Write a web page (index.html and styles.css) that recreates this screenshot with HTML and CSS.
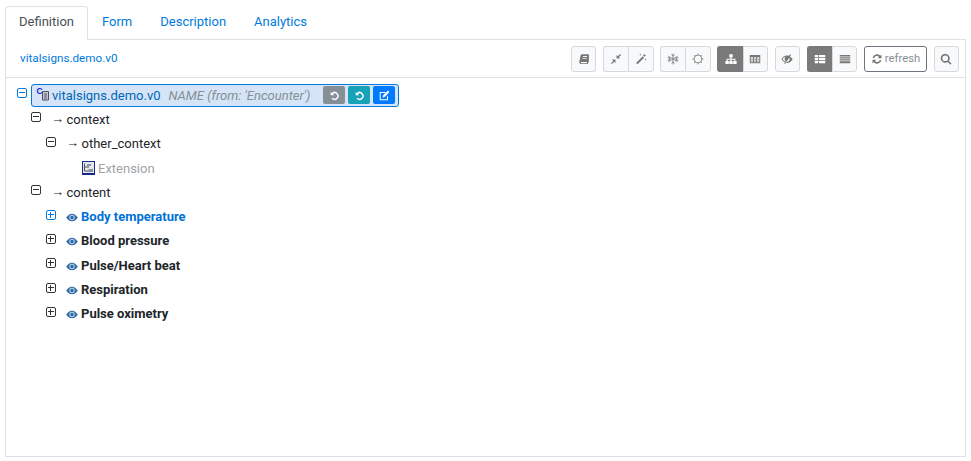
FILE: index.html
```html
<!DOCTYPE html>
<html lang="en">
<head>
  <meta charset="UTF-8">
  <title>Definition</title>
  <link rel="stylesheet" href="styles.css">
</head>
<body>
  <ul class="tabs">
    <li class="tab active">Definition</li>
    <li class="tab">Form</li>
    <li class="tab">Description</li>
    <li class="tab">Analytics</li>
  </ul>

  <div class="panel">
    <div class="toolbar">
      <span class="archetype-id">vitalsigns.demo.v0</span>
      <div class="tools">
        <div class="btn-group">
          <button class="btn"><svg viewBox="0 0 16 16"><path d="M5 1.500h9.500v10l-1 1v2H4.500A2.200 2.200 0 0 1 1.700 12L3.500 3C3.700 2.100 4.200 1.500 5 1.500zM4.200 12a1 1 0 0 0 0 1.500H12V12zM6.500 4v1.200h5.500V4zM6 6.500v1.200h5.500V6.500z"/></svg></button>
        </div>
        <div class="btn-group">
          <button class="btn"><svg viewBox="0 0 16 16"><path d="M8.700 7.300V2.500l1.800 1.800L13.500 1.300 14.700 2.500l-3 3 1.800 1.800zM7.300 8.700v4.800l-1.800-1.800-3 3L1.300 13.500l3-3L2.500 8.700z"/></svg></button>
          <button class="btn"><svg viewBox="0 0 16 16"><path d="M1.500 13.200 10.300 4.400l1.800 1.800L3.300 15zM12.500.8l.6 1.900 1.900.6-1.900.6-.6 1.900-.6-1.900-1.900-.6 1.900-.6zM14 7l.4 1.200 1.200.4-1.200.4-.4 1.200-.4-1.200-1.200-.4 1.200-.4zM7 .8l.4 1.200 1.200.4-1.200.4L7 4l-.4-1.200-1.200-.4 1.200-.4z"/></svg></button>
        </div>
        <div class="btn-group">
          <button class="btn"><svg viewBox="0 0 16 16" class="line"><path d="M8 .8v14.400M1.800 4.400l12.400 7.200M14.200 4.400 1.800 11.600M5.800 2 8 4.200 10.200 2M5.800 14 8 11.800 10.200 14M.9 6.200l3 .8-.8 3M15.100 6.200l-3 .8.800 3M.9 9.800l3-.8-.8-3M15.100 9.800l-3-.8.800-3"/></svg></button>
          <button class="btn"><svg viewBox="0 0 16 16" class="line"><circle cx="8" cy="8" r="5.300"/><path d="M8 .8v1.900M8 13.300v1.900M.8 8h1.900M13.300 8h1.900M2.900 2.900l1.400 1.400M11.700 11.700l1.400 1.400M2.900 13.100l1.400-1.400M11.700 4.300l1.400-1.400"/></svg></button>
        </div>
        <div class="btn-group">
          <button class="btn on"><svg viewBox="0 0 16 16"><path d="M5.700 1.500h4.600v4H8.800v2h5v3h1.700v4h-4.600v-4h1.500V9H8.800v1.500h1.500v4H5.700v-4h1.500V9H3.600v1.500h1.500v4H.5v-4h1.700v-3h5v-2H5.700z"/></svg></button>
          <button class="btn"><svg viewBox="0 0 16 16"><path d="M1 2.500h14v11H1zM2.200 5.500v2h3.300v-2zm4.500 0v2h2.600v-2zm3.800 0v2h3.300v-2zM2.200 8.500v1.700h3.300V8.500zm4.500 0v1.700h2.600V8.500zm3.800 0v1.700h3.300V8.500zM2.200 11.200v1.200h3.300v-1.200zm4.500 0v1.200h2.600v-1.200zm3.800 0v1.200h3.300v-1.200z"/></svg></button>
        </div>
        <div class="btn-group">
          <button class="btn"><svg viewBox="0 0 16 16"><path d="M8 3.200c-3.200 0-6 2-7.500 4.800 1 1.900 2.500 3.300 4.300 4.100l.7-1.200C3.900 10.200 2.600 9.200 1.900 8 3 6.300 4.500 5.100 6.200 4.500a4 4 0 0 0 .1 6.100l4.700-7C10 3.400 9 3.200 8 3.200zM12.300 1.800 4.300 13.800l1.100.7 8-12zM11.900 4.900l-.9 1.300a3.900 3.900 0 0 1-3 5.800l-.9 1.300c.3 0 .6.100.9.100 3.200 0 6-2 7.500-5-.8-1.500-2-2.700-3.600-3.500z"/></svg></button>
        </div>
        <div class="btn-group">
          <button class="btn on"><svg viewBox="0 0 16 16"><path d="M1 2.500h4.500v3.200H1zM6.500 2.500H15v3.200H6.500zM1 6.700h4.500v2.600H1zM6.500 6.700H15v2.600H6.500zM1 10.300h4.500v3.200H1zM6.500 10.300H15v3.200H6.500z"/></svg></button>
          <button class="btn"><svg viewBox="0 0 16 16"><path d="M1 2.500h14v2.200H1zM1 5.700h14v1.600H1zM1 8.300h14v1.600H1zM1 10.900h14v2.600H1z"/></svg></button>
        </div>
        <button class="btn refresh">
          <svg viewBox="0 0 16 16"><path d="M14 9.500A6.200 6.200 0 0 1 3.600 12.300L2 14V8.900h5.100L5.200 10.700a3.900 3.900 0 0 0 6.500-1.200zM2 6.500a6.200 6.200 0 0 1 10.400-2.800L14 2v5.100H8.900l1.900-1.800a3.900 3.900 0 0 0-6.500 1.200z"/></svg>
          refresh
        </button>
        <button class="btn"><svg viewBox="0 0 16 16"><path fill-rule="evenodd" d="M7 1a6 6 0 0 1 4.800 9.500l3.500 3.500-1.500 1.500-3.500-3.500A6 6 0 1 1 7 1zm0 2.200a3.800 3.800 0 1 0 0 7.600 3.800 3.800 0 0 0 0-7.600z"/></svg></button>
      </div>
    </div>

    <div class="tree">
      <div class="node root">
        <span class="toggle selected minus"></span>
        <div class="root-label">
          <svg class="class-icon" viewBox="0 0 16 16"><path d="M6.500 4.500h6v8.500h-6z" fill="#c9ccd6" stroke="#4a4f63"/><path d="M8 7h3M8 9h3M8 11h3" stroke="#4a4f63"/><text x="0.500" y="6.500" class="class-c">C</text></svg>
          <span class="root-name">vitalsigns.demo.v0</span>
          <em class="root-meta">NAME (from: 'Encounter')</em>
          <span class="mini grey"><svg viewBox="0 0 16 16"><path d="M2.500 2.500v5.200h5.200L5.700 5.700a3.800 3.800 0 1 1-.4 5.400l-1.600 1.400A5.900 5.900 0 1 0 4.200 4.200z"/></svg></span>
          <span class="mini teal"><svg viewBox="0 0 16 16"><path d="M2.500 2.500v5.200h5.200L5.700 5.700a3.800 3.800 0 1 1-.4 5.400l-1.600 1.400A5.900 5.900 0 1 0 4.200 4.200z"/></svg></span>
          <span class="mini blue"><svg viewBox="0 0 16 16"><path d="M1 3h9L8.600 4.400H2.400v9.200h9.200V9.400L13 8v7H1zM13 .8l2.200 2.200-7 7-3 .8.800-3z"/></svg></span>
        </div>
      </div>
      <div class="node depth-1"><span class="toggle minus"></span><span class="arrow">→</span>context</div>
      <div class="node depth-2"><span class="toggle minus"></span><span class="arrow">→</span>other_context</div>
      <div class="node depth-3 slot">
        <svg class="ext-icon" viewBox="0 0 13 14"><path d="M0 0h13v14H0z" fill="#1a2a8c"/><path d="M1 1h11v11H1z" fill="#e4e6ea"/><path d="M2.500 2.500v7.500H10M2.500 6H7" fill="none" stroke="#555"/><path d="M5 3h4v2H5zM6.500 8h4.500v3H6.500z" fill="#8b93a8"/></svg>
        Extension
      </div>
      <div class="node depth-1"><span class="toggle minus"></span><span class="arrow">→</span>content</div>
      <div class="node depth-2 item selected-item"><span class="toggle selected plus"></span><svg class="eye" viewBox="0 0 14 10"><path d="M7 .5C4 .5 1.800 2.600.3 5c1.500 2.400 3.700 4.500 6.700 4.500S12.200 7.400 13.700 5C12.200 2.600 10 .5 7 .5z"/><circle cx="7" cy="5" r="3.200" fill="#bcd0e6"/><circle cx="7" cy="5" r="2"/></svg>Body temperature</div>
      <div class="node depth-2 item"><span class="toggle plus"></span><svg class="eye" viewBox="0 0 14 10"><path d="M7 .5C4 .5 1.800 2.600.3 5c1.500 2.400 3.700 4.500 6.700 4.500S12.200 7.400 13.700 5C12.200 2.600 10 .5 7 .5z"/><circle cx="7" cy="5" r="3.200" fill="#bcd0e6"/><circle cx="7" cy="5" r="2"/></svg>Blood pressure</div>
      <div class="node depth-2 item"><span class="toggle plus"></span><svg class="eye" viewBox="0 0 14 10"><path d="M7 .5C4 .5 1.800 2.600.3 5c1.500 2.400 3.700 4.500 6.700 4.500S12.200 7.400 13.700 5C12.200 2.600 10 .5 7 .5z"/><circle cx="7" cy="5" r="3.200" fill="#bcd0e6"/><circle cx="7" cy="5" r="2"/></svg>Pulse/Heart beat</div>
      <div class="node depth-2 item"><span class="toggle plus"></span><svg class="eye" viewBox="0 0 14 10"><path d="M7 .5C4 .5 1.800 2.600.3 5c1.500 2.400 3.700 4.500 6.700 4.500S12.200 7.400 13.700 5C12.200 2.600 10 .5 7 .5z"/><circle cx="7" cy="5" r="3.200" fill="#bcd0e6"/><circle cx="7" cy="5" r="2"/></svg>Respiration</div>
      <div class="node depth-2 item"><span class="toggle plus"></span><svg class="eye" viewBox="0 0 14 10"><path d="M7 .5C4 .5 1.800 2.600.3 5c1.500 2.400 3.700 4.500 6.700 4.500S12.200 7.400 13.700 5C12.200 2.600 10 .5 7 .5z"/><circle cx="7" cy="5" r="3.200" fill="#bcd0e6"/><circle cx="7" cy="5" r="2"/></svg>Pulse oximetry</div>
    </div>
  </div>
</body>
</html>
```

FILE: styles.css
```css
* {
  margin: 0;
  padding: 0;
  box-sizing: border-box;
}

body {
  font-family: Roboto, sans-serif;
  font-size: 13px;
  color: #212529;
  background: #fff;
  padding: 6px 5px 4px;
  height: 461px;
  overflow: hidden;
  display: flex;
  flex-direction: column;
}

/* Tabs */
.tabs {
  display: flex;
  list-style: none;
  height: 34px;
  position: relative;
  z-index: 1;
}

.tab {
  padding: 0 13px;
  line-height: 29px;
  color: #007bdb;
  border: 1px solid transparent;
  border-radius: 4px 4px 0 0;
}

.tab.active {
  color: #495057;
  background: #fff;
  border-color: #dee2e6 #dee2e6 #fff;
  height: 34px;
}

/* Panel */
.panel {
  flex: 1;
  border: 1px solid #dee2e6;
  margin-top: -1px;
}

.toolbar {
  display: flex;
  align-items: center;
  justify-content: space-between;
  height: 38px;
  padding: 0 6px 0 14px;
  border-bottom: 1px solid #dee2e6;
}

.archetype-id {
  font-size: 11.7px;
  color: #007bdb;
  position: relative;
  top: -1px;
}

.tools {
  display: flex;
  gap: 6.7px;
}

.btn-group {
  display: flex;
}

.btn {
  width: 25.3px;
  height: 26px;
  display: flex;
  align-items: center;
  justify-content: center;
  background: #f8f9fa;
  border: 1px solid #d5d8dc;
  border-radius: 3px;
  color: #6c757d;
  font: inherit;
}

.btn svg {
  width: 12px;
  height: 12px;
  fill: #777;
}

.btn svg.line {
  fill: none;
  stroke: #777;
  stroke-width: 1.1;
}

.btn.on {
  background: #7a7a7a;
  border-color: #7a7a7a;
}

.btn.on svg {
  fill: #fff;
}

.btn-group .btn:first-child:not(:last-child) {
  border-radius: 3px 0 0 3px;
  border-right-width: 0;
}

.btn-group .btn:last-child:not(:first-child) {
  border-radius: 0 3px 3px 0;
}

.refresh {
  width: 63px;
  gap: 2px;
  font-size: 11.3px;
  background: #fff;
  border-color: #6c757d;
  color: #868e96;
}

/* Tree */
.tree {
  padding-top: 5px;
}

.node {
  display: flex;
  align-items: center;
  height: 24.3px;
  white-space: nowrap;
  position: relative;
}

.toggle {
  width: 10px;
  height: 10px;
  border: 1px solid #333;
  border-radius: 2px;
  position: relative;
  top: -2px;
  flex-shrink: 0;
}

.toggle::before {
  content: '';
  position: absolute;
  left: 1px;
  right: 1px;
  top: 3px;
  height: 1px;
  background: #333;
}

.toggle.plus::after {
  content: '';
  position: absolute;
  top: 1px;
  bottom: 1px;
  left: 3px;
  width: 1px;
  background: #333;
}

.toggle.selected {
  border-color: #007bdb;
}

.toggle.selected::before,
.toggle.selected::after {
  background: #007bdb;
}

.root {
  padding-left: 11px;
}

.depth-1 {
  padding-left: 25px;
}

.depth-2 {
  padding-left: 40px;
}

.depth-3 {
  padding-left: 76px;
}

.arrow {
  margin-left: 10px;
  margin-right: 4.5px;
  width: 11px;
  font-size: 13px;
  text-align: center;
  position: relative;
  top: -1px;
}

.root-label {
  display: flex;
  align-items: center;
  width: 368px;
  height: 23px;
  margin-left: 4px;
  padding-left: 4px;
  background: #d5e4f7;
  border: 1px solid #007bdb;
  border-radius: 3px;
}

.class-icon {
  width: 16px;
  height: 16px;
  flex-shrink: 0;
}

.class-c {
  font-family: "Liberation Sans", sans-serif;
  font-size: 8.5px;
  font-weight: bold;
  fill: #1c1cdc;
}

.root-name {
  color: #0067b8;
}

.root-meta {
  margin-left: 8px;
  color: #868e96;
}

.mini {
  width: 22px;
  height: 18px;
  margin-left: 3px;
  display: flex;
  align-items: center;
  justify-content: center;
  border-radius: 2px;
}

.mini svg {
  width: 11px;
  height: 11px;
  fill: #fff;
}

.mini.grey {
  margin-left: 13px;
  background: #868e96;
}

.mini.teal {
  background: #17a2b8;
}

.mini.blue {
  background: #007bff;
}

.slot {
  color: #a0a4a8;
}

.ext-icon {
  width: 13px;
  height: 14px;
  margin-right: 3px;
}

.item {
  font-weight: 700;
}

.selected-item {
  color: #0072d6;
}

.eye {
  width: 12px;
  height: 9px;
  margin: 2px 3px 0 10px;
  fill: #2f6da8;
}
```
